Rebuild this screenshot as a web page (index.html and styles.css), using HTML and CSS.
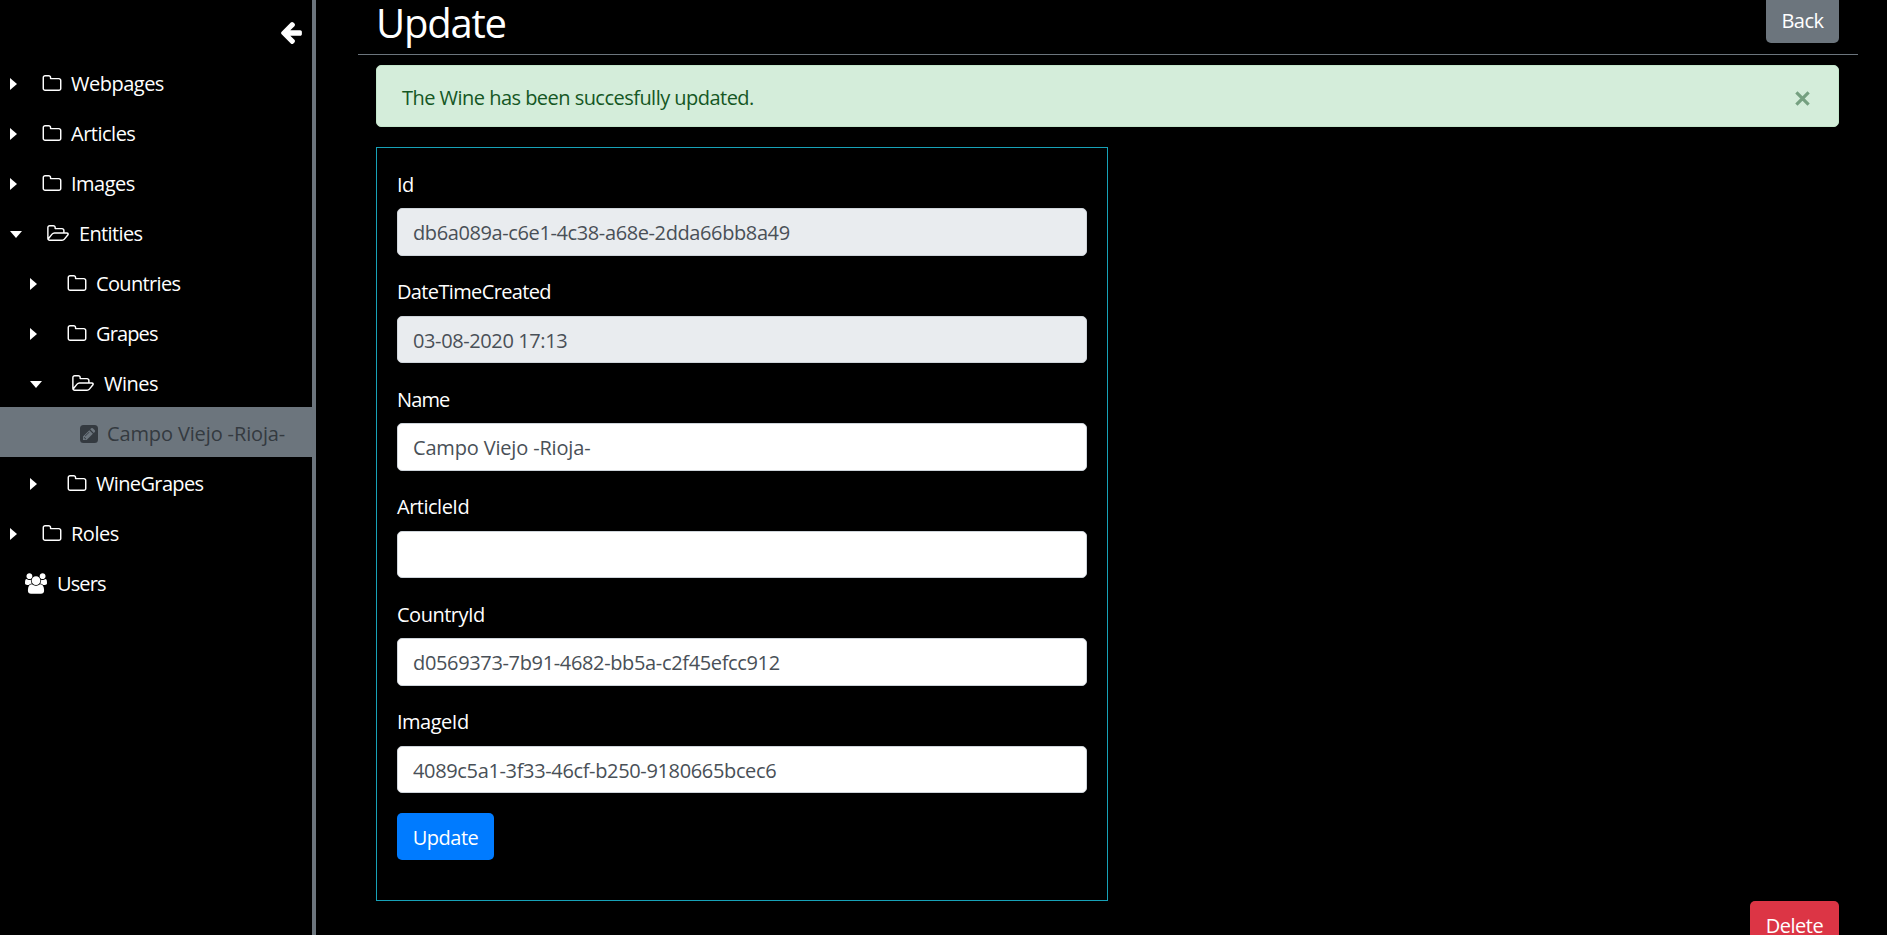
FILE: index.html
```html
<!DOCTYPE html>
<html lang="en">
<head>
<meta charset="utf-8">
<title>Update</title>
<link rel="stylesheet" href="styles.css">
</head>
<body>
<svg class="defs" aria-hidden="true">
  <symbol id="folder" viewBox="0 128 1664 1408"><path d="M1536 1312v-704q0-40-28-68t-68-28h-704q-40 0-68-28t-28-68v-64q0-40-28-68t-68-28h-320q-40 0-68 28t-28 68v960q0 40 28 68t68 28h1216q40 0 68-28t28-68zm128-704v704q0 92-66 158t-158 66h-1216q-92 0-158-66t-66-158v-960q0-92 66-158t158-66h320q92 0 158 66t66 158v32h672q92 0 158 66t66 158z"/></symbol>
  <symbol id="folder-open" viewBox="0 128 1909 1408"><path d="M1781 931q0-35-53-35h-1088q-40 0-85.500 21.500t-71.500 52.500l-294 363q-18 24-18 40 0 35 53 35h1088q40 0 86-22t71-53l294-363q18-22 18-39zm-1141-163h768v-160q0-40-28-68t-68-28h-576q-40 0-68-28t-28-68v-64q0-40-28-68t-68-28h-320q-40 0-68 28t-28 68v853l256-315q44-53 116-87.500t140-34.500zm1269 163q0 62-46 120l-295 363q-43 53-116 87.500t-140 34.500h-1088q-92 0-158-66t-66-158v-960q0-92 66-158t158-66h320q92 0 158 66t66 158v32h544q92 0 158 66t66 158v160h192q54 0 99 24.500t67 70.500q15 32 15 68z"/></symbol>
</svg>
<div class="app">
  <nav class="sidebar">
    <div class="collapse">
      <svg class="arrow" viewBox="64 181 1472 1559"><path d="M1536 896v128q0 53-32.500 90.500t-84.500 37.500h-704l293 294q38 36 38 90t-38 90l-75 76q-37 37-90 37-52 0-91-37l-651-652q-37-37-37-90 0-52 37-91l651-650q38-38 91-38 52 0 90 38l75 74q38 38 38 91t-38 91l-293 293h704q52 0 84.500 37.500t32.500 90.500z"/></svg>
    </div>
    <a class="node"><i class="caret"></i><svg class="folder"><use href="#folder"/></svg><span>Webpages</span></a>
    <a class="node"><i class="caret"></i><svg class="folder"><use href="#folder"/></svg><span>Articles</span></a>
    <a class="node"><i class="caret"></i><svg class="folder"><use href="#folder"/></svg><span>Images</span></a>
    <a class="node"><i class="caret down"></i><svg class="folder open"><use href="#folder-open"/></svg><span class="snug">Entities</span></a>
    <a class="node sub"><i class="caret"></i><svg class="folder"><use href="#folder"/></svg><span class="snug">Countries</span></a>
    <a class="node sub"><i class="caret"></i><svg class="folder"><use href="#folder"/></svg><span class="tight">Grapes</span></a>
    <a class="node sub"><i class="caret down"></i><svg class="folder open"><use href="#folder-open"/></svg><span>Wines</span></a>
    <a class="node leaf active"><svg class="pencil" viewBox="0 0 18 18"><path fill-rule="evenodd" d="M3.500 0h11A3.500 3.500 0 0 1 18 3.500v11a3.500 3.500 0 0 1-3.500 3.500h-11A3.500 3.500 0 0 1 0 14.500v-11A3.500 3.500 0 0 1 3.500 0zM3 11.500v3.600h3.600l6.300-6.300-3.600-3.600zM10.200 4.300l3.600 3.600 1-1q.8-.8 0-1.600l-2-2q-.8-.8-1.600 0zM4.300 12l1.800 1.800-.5.500h-.7v-1.100H3.800v-.7zM8.900 6.900q.7-.2.400.5l-3.800 3.800q-.7.200-.5-.5z"/></svg><span class="loose">Campo Viejo -Rioja-</span></a>
    <a class="node sub"><i class="caret"></i><svg class="folder"><use href="#folder"/></svg><span class="snug">WineGrapes</span></a>
    <a class="node"><i class="caret"></i><svg class="folder"><use href="#folder"/></svg><span>Roles</span></a>
    <a class="node users"><svg class="group" viewBox="0 0 1920 1792"><path d="M593 896q-162 5-265 128h-134q-82 0-138-40.500t-56-118.500q0-353 124-353 6 0 43.500 21t97.500 42.500 119 21.500q67 0 133-23-5 37-5 66 0 139 81 256zm1071 637q0 120-73 189.500t-194 69.500h-874q-121 0-194-69.500t-73-189.500q0-53 3.500-103.500t14-109 26.500-108.500 43-97.500 62-81 85.500-53.500 111.500-20q10 0 43 21.500t73 48 107 48 135 21.500 135-21.500 107-48 73-48 43-21.500q61 0 111.500 20t85.500 53.500 62 81 43 97.500 26.500 108.500 14 109 3.500 103.500zm-1024-1277q0 106-75 181t-181 75-181-75-75-181 75-181 181-75 181 75 75 181zm704 384q0 159-112.500 271.500t-271.500 112.500-271.500-112.500-112.500-271.500 112.500-271.500 271.500-112.500 271.500 112.500 112.500 271.500zm576 225q0 78-56 118.500t-138 40.500h-134q-103-123-265-128 81-117 81-256 0-29-5-66 66 23 133 23 59 0 119-21.500t97.500-42.500 43.500-21q124 0 124 353zm-128-609q0 106-75 181t-181 75-181-75-75-181 75-181 181-75 181 75 75 181z"/></svg><span class="tight">Users</span></a>
  </nav>
  <main class="content">
    <header class="header">
      <h1>Update</h1>
      <button class="btn back"><span>Back</span></button>
    </header>
    <section class="body">
      <div class="alert">
        <span>The Wine has been succesfully updated.</span>
        <svg class="close" viewBox="0 0 14 14"><path d="M1.300 1.300l11.400 11.400M12.700 1.300L1.300 12.700"/></svg>
      </div>
      <form class="form">
        <label class="field"><span class="label">Id</span><input class="guid" readonly value="db6a089a-c6e1-4c38-a68e-2dda66bb8a49"></label>
        <label class="field"><span class="label snug">DateTimeCreated</span><input class="guid" readonly value="03-08-2020 17:13"></label>
        <label class="field"><span class="label tight">Name</span><input class="loose" value="Campo Viejo -Rioja-"></label>
        <label class="field"><span class="label">ArticleId</span><input value=""></label>
        <label class="field"><span class="label">CountryId</span><input class="guid-wide" value="d0569373-7b91-4682-bb5a-c2f45efcc912"></label>
        <label class="field"><span class="label">ImageId</span><input class="guid-wide" value="4089c5a1-3f33-46cf-b250-9180665bcec6"></label>
        <button type="button" class="btn update"><span>Update</span></button>
      </form>
      <div class="actions"><button class="btn delete"><span>Delete</span></button></div>
    </section>
  </main>
</div>
</body>
</html>
```
FILE: styles.css
```css
* { box-sizing: border-box; }
html, body { height: 100%; }
body {
  margin: 0;
  overflow: hidden;
  background: #000;
  color: #fff;
  font: 20px/30px "Open Sans", "Noto Sans", sans-serif;
  letter-spacing: -0.5px;
}
.defs { display: none; }
.app { display: flex; height: 100%; overflow: hidden; }

/* tracking variants */
.snug { letter-spacing: -0.64px; }
.tight { letter-spacing: -0.88px; }

/* sidebar */
.sidebar { flex: none; width: 316px; border-right: 4px solid #6c757d; }
.collapse { display: flex; justify-content: flex-end; height: 57px; padding: 22px 10px 0 0; }
.arrow { width: 21px; height: 22px; fill: #fff; }
.node {
  display: flex;
  align-items: center;
  height: 50px;
  padding-left: 10px;
  line-height: 46px;
  white-space: nowrap;
}
.node span { padding-top: 4px; }
.node .loose { letter-spacing: -0.13px; }
.node.sub { padding-left: 30px; }
.caret {
  flex: none;
  margin: 4px 25px 0 0;
  border-left: 7px solid #fff;
  border-top: 6px solid transparent;
  border-bottom: 6px solid transparent;
}
.caret.down {
  border-top: 7px solid #fff;
  border-left: 6px solid transparent;
  border-right: 6px solid transparent;
  border-bottom: 0;
}
.sub .caret { margin-right: 30px; }
.folder { flex: none; width: 20px; height: 16px; margin: 2px 9px 0 0; fill: #fff; }
.folder.open { width: 22px; margin-right: 10px; }
.node.leaf { padding-left: 80px; }
.node.active { background: #6c757d; color: #343a40; }
.pencil { width: 18px; height: 18px; margin: 4px 9px 0 0; fill: #343a40; }
.node.users { padding-left: 25px; }
.group { width: 22px; height: 21px; margin: 3px 10px 0 0; fill: #fff; }

/* main column */
.content { flex: 1; padding: 0 29px 0 42px; }
.header {
  display: flex;
  justify-content: space-between;
  height: 55px;
  padding: 0 19px 0 18px;
  border-bottom: 1px solid #6c757d;
}
h1 { margin: 0; font-size: 40px; font-weight: 400; line-height: 46px; letter-spacing: -1.2px; }
.body { padding: 10px 19px 0 18px; }
.btn {
  height: 47px;
  padding: 2px 0 0;
  border: 0;
  border-radius: 5px;
  color: #fff;
  font: inherit;
  letter-spacing: inherit;
}
.back { width: 73px; margin-top: -4px; background: #6c757d; }
.update { width: 97px; background: #007bff; }
.delete { width: 89px; background: #dc3545; }
.alert {
  display: flex;
  align-items: center;
  justify-content: space-between;
  height: 62px;
  padding: 0 28px 0 25px;
  border: 1px solid #c3e6cb;
  border-radius: 5px;
  background: #d4edda;
  color: #155724;
  letter-spacing: -0.53px;
}
.alert span { padding-top: 4px; }
.close { width: 15px; height: 15px; margin-top: 5px; stroke: #75a080; stroke-width: 3; }
.form {
  width: 732px;
  height: 754px;
  margin-top: 20px;
  padding: 20px;
  border: 1px solid #17a2b8;
}
.field { display: block; height: 107.5px; }
.label { display: block; height: 30px; margin-bottom: 10px; padding-top: 1.6px; }
input {
  display: block;
  width: 690px;
  height: 47.5px;
  padding: 1.6px 15px 0;
  border: 1px solid #ced4da;
  border-radius: 5px;
  background: #fff;
  color: #495057;
  font: inherit;
  letter-spacing: inherit;
}
input[readonly] { background: #e9ecef; }
input.guid { letter-spacing: -0.39px; }
input.guid-wide { letter-spacing: -0.35px; }
input.loose { letter-spacing: -0.17px; }
.actions { display: flex; justify-content: flex-end; }
```
